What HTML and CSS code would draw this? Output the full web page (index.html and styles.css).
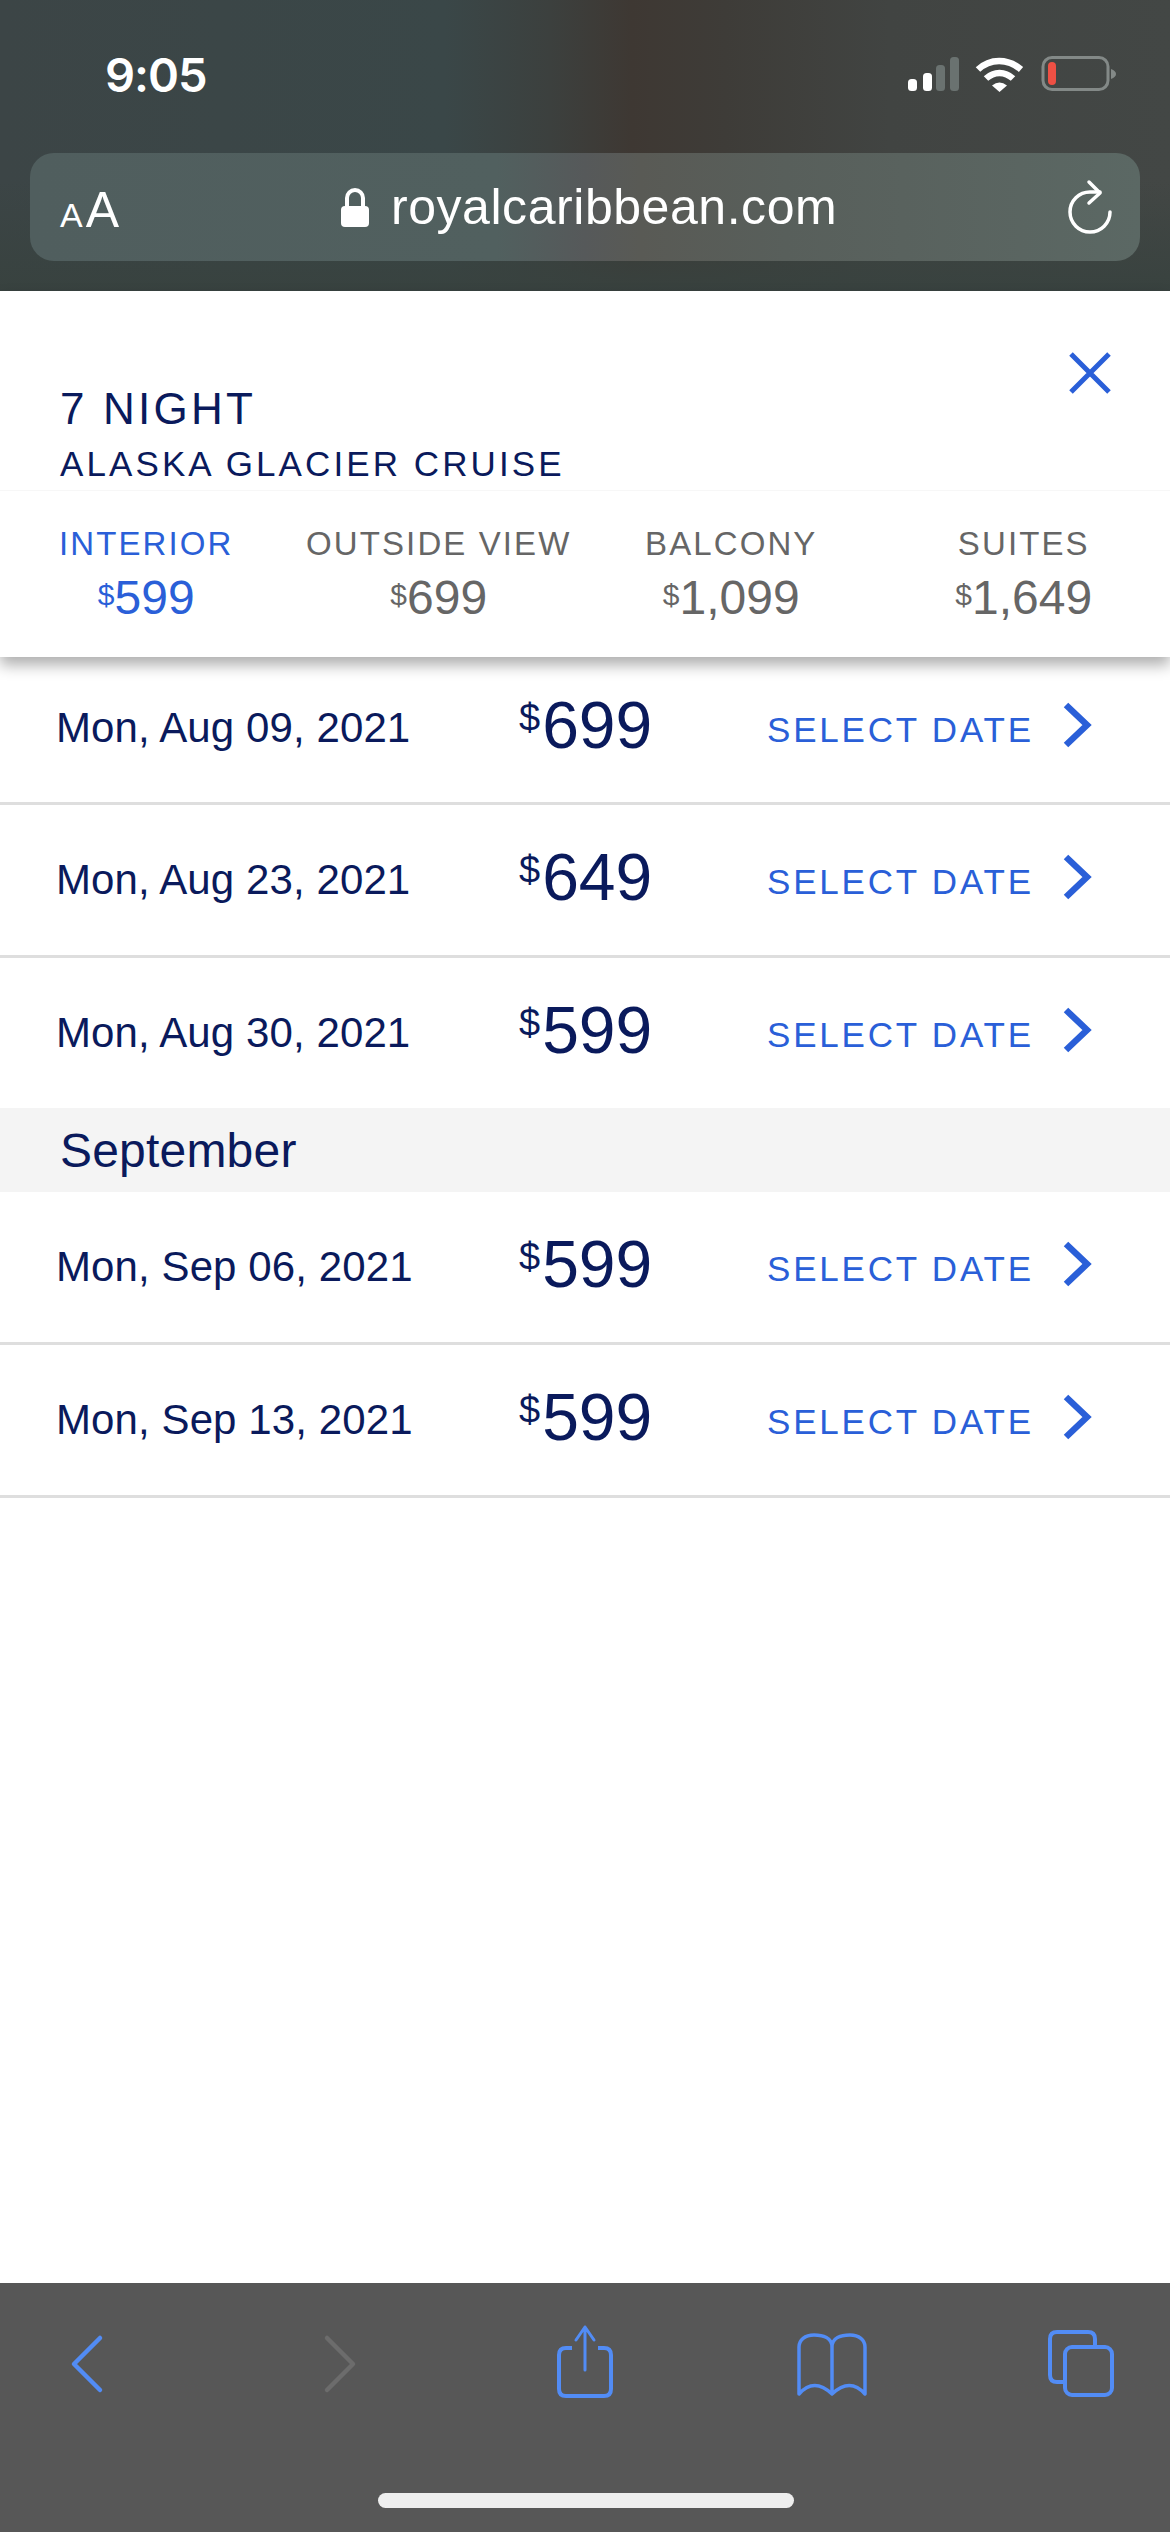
FILE: index.html
```html
<!DOCTYPE html>
<html lang="en">
<head>
<meta charset="utf-8">
<title>Royal Caribbean</title>
<link rel="stylesheet" href="styles.css">
</head>
<body>
<div class="phone">
  <header class="chrome">
    <div class="status">
      <span class="time">9:05</span>
      <svg class="status-icons" width="210" height="40" viewBox="0 0 210 40">
        <rect x="0" y="23" width="9" height="12" rx="3.5" fill="#fff"/>
        <rect x="15" y="17" width="9" height="18" rx="3.5" fill="#fff"/>
        <rect x="28" y="9" width="9" height="26" rx="3.5" fill="#6a7270"/>
        <rect x="42" y="1" width="9" height="34" rx="3.5" fill="#6a7270"/>
        <path d="M70 13.500C82 2 100 2 113 13.500" fill="none" stroke="#fff" stroke-width="6.5"/>
        <path d="M78 22.500C86 15 97 15 105 22.500" fill="none" stroke="#fff" stroke-width="6.5"/>
        <path d="M84 29.500Q91.500 23.500 99 29.500L91.500 36Z" fill="#fff"/>
        <rect x="135" y="1.500" width="65" height="32" rx="9" fill="none" stroke="#838987" stroke-width="3"/>
        <rect x="140" y="6" width="8" height="23" rx="4" fill="#ee5044"/>
        <path d="M203 13Q208 15 208 18T203 23Z" fill="#838987"/>
      </svg>
    </div>
    <div class="address">
      <span class="aa"><span class="aa-small">A</span>A</span>
      <span class="domain">
        <svg class="lock" width="28" height="39" viewBox="0 0 28 39"><path d="M6 20V10a8 8 0 0 1 16 0v10" fill="none" stroke="#fff" stroke-width="4"/><rect x="0" y="18" width="28" height="21" rx="4" fill="#fff"/></svg>
        <span class="domain-text">royalcaribbean.com</span>
      </span>
      <svg class="reload" width="46" height="56" viewBox="0 0 46 56"><path d="M44 33A20 20 0 1 1 24 13H34" fill="none" stroke="#fff" stroke-width="3.500" stroke-linecap="round"/><path d="M23 3L34 14L23 24" fill="none" stroke="#fff" stroke-width="3.500" stroke-linecap="round" stroke-linejoin="round"/></svg>
    </div>
  </header>

  <main class="page">
    <section class="card">
      <div class="card-head">
        <div class="titles">
          <h1 class="title">7 NIGHT</h1>
          <h2 class="subtitle">ALASKA GLACIER CRUISE</h2>
        </div>
        <svg class="close" width="44" height="42" viewBox="0 0 44 42"><path d="M3 2L41 40M41 2L3 40" fill="none" stroke="#2a5fd8" stroke-width="5"/></svg>
      </div>
      <div class="tabs">
        <div class="tab is-active"><div class="tab-name">INTERIOR</div><div class="tab-price"><span class="cur">$</span>599</div></div>
        <div class="tab"><div class="tab-name">OUTSIDE VIEW</div><div class="tab-price"><span class="cur">$</span>699</div></div>
        <div class="tab"><div class="tab-name">BALCONY</div><div class="tab-price"><span class="cur">$</span>1,099</div></div>
        <div class="tab"><div class="tab-name">SUITES</div><div class="tab-price"><span class="cur">$</span>1,649</div></div>
      </div>
    </section>

    <ul class="rows rows-first">
      <li class="row"><span class="date">Mon, Aug 09, 2021</span><span class="price"><span class="price-cur">$</span>699</span><span class="select">SELECT DATE</span><svg class="chev" width="30" height="46" viewBox="0 0 30 46"><path d="M4 3L25 23L4 43" fill="none" stroke="#2a5fd8" stroke-width="6.500"/></svg></li>
      <li class="row"><span class="date">Mon, Aug 23, 2021</span><span class="price"><span class="price-cur">$</span>649</span><span class="select">SELECT DATE</span><svg class="chev" width="30" height="46" viewBox="0 0 30 46"><path d="M4 3L25 23L4 43" fill="none" stroke="#2a5fd8" stroke-width="6.500"/></svg></li>
      <li class="row row-last"><span class="date">Mon, Aug 30, 2021</span><span class="price"><span class="price-cur">$</span>599</span><span class="select">SELECT DATE</span><svg class="chev" width="30" height="46" viewBox="0 0 30 46"><path d="M4 3L25 23L4 43" fill="none" stroke="#2a5fd8" stroke-width="6.500"/></svg></li>
    </ul>
    <div class="month">September</div>
    <ul class="rows">
      <li class="row"><span class="date">Mon, Sep 06, 2021</span><span class="price"><span class="price-cur">$</span>599</span><span class="select">SELECT DATE</span><svg class="chev" width="30" height="46" viewBox="0 0 30 46"><path d="M4 3L25 23L4 43" fill="none" stroke="#2a5fd8" stroke-width="6.500"/></svg></li>
      <li class="row"><span class="date">Mon, Sep 13, 2021</span><span class="price"><span class="price-cur">$</span>599</span><span class="select">SELECT DATE</span><svg class="chev" width="30" height="46" viewBox="0 0 30 46"><path d="M4 3L25 23L4 43" fill="none" stroke="#2a5fd8" stroke-width="6.500"/></svg></li>
    </ul>
  </main>

  <footer class="toolbar">
    <div class="tools">
      <svg class="tool" width="80" height="80" viewBox="0 0 80 80"><path d="M54 18L28 44L54 70" fill="none" stroke="#528cf5" stroke-width="4.500" stroke-linecap="round" stroke-linejoin="round"/></svg>
      <svg class="tool" width="80" height="80" viewBox="0 0 80 80"><path d="M31 18L57 44L31 70" fill="none" stroke="#6c6c6c" stroke-width="4.500" stroke-linecap="round" stroke-linejoin="round"/></svg>
      <svg class="tool" width="80" height="80" viewBox="0 0 80 80"><path d="M26 28H20Q13 28 13 35V69Q13 76 20 76H58Q65 76 65 69V35Q65 28 58 28H52" fill="none" stroke="#528cf5" stroke-width="4"/><path d="M39 50V7M30 20L39 7L48 20" fill="none" stroke="#528cf5" stroke-width="3" stroke-linecap="round" stroke-linejoin="round"/></svg>
      <svg class="tool" width="80" height="80" viewBox="0 0 80 80"><path d="M36 72V27C36 18 27 15 18 15C9 15 3 20 3 27V74Q18 57 36 74Q54 57 69 74V27C69 20 63 15 54 15C45 15 36 18 36 27" fill="none" stroke="#528cf5" stroke-width="3.500" stroke-linejoin="round"/></svg>
      <svg class="tool" width="80" height="80" viewBox="0 0 80 80"><path d="M18 62H11Q4 62 4 55V19Q4 12 11 12H42Q49 12 49 19V27" fill="none" stroke="#528cf5" stroke-width="4"/><rect x="19" y="27" width="47" height="48" rx="7" fill="none" stroke="#528cf5" stroke-width="4"/></svg>
    </div>
    <div class="home"></div>
  </footer>
</div>
</body>
</html>
```

FILE: styles.css
```css
* { box-sizing: border-box; }
html, body { margin: 0; padding: 0; background: #fff; }
body { font-family: "Liberation Sans", Arial, sans-serif; color: #0a1a5c; }
h1, h2, ul { margin: 0; padding: 0; list-style: none; font-weight: 400; }
.phone { width: 1170px; height: 2532px; display: flex; flex-direction: column; overflow: hidden; }

.chrome {
  height: 291px; flex: none; padding: 55px 30px 0;
  background:
    linear-gradient(180deg, rgba(56, 66, 63, 0) 62%, rgba(56, 66, 63, .95) 100%),
    linear-gradient(90deg, #3c4546 0%, #3a4748 38%, #3c403e 47%, #3e3833 54%, #3e3c38 62%, #414442 76%, #434745 100%);
}
.status { display: flex; justify-content: space-between; align-items: center; height: 40px; padding: 0 22px 0 75px; }
.time { font-family: Inter, sans-serif; font-weight: 600; font-size: 47px; color: #fff; line-height: 40px; letter-spacing: -1px; }
.status-icons { display: block; margin-top: 2px; }
.address {
  margin-top: 58px; height: 108px; border-radius: 24px; display: flex; align-items: center; justify-content: space-between;
  padding: 0 28px 0 30px; color: #fff;
  background: linear-gradient(90deg, #505e5e 0%, #51605f 42%, #56595a 50%, #595a55 55%, #585f5b 68%, #5b6864 100%);
}
.aa { font-size: 50px; line-height: 1; width: 281px; margin-top: 6px; }
.aa-small { font-size: 34px; margin-right: 3px; }
.domain { display: flex; align-items: center; gap: 22px; margin-right: auto; }
.lock { display: block; }
.domain-text { font-size: 50px; line-height: 60px; letter-spacing: .55px; }
.reload { display: block; }

.page { flex: 1; display: flex; flex-direction: column; background: #fff; }
.card { position: relative; z-index: 1; height: 366px; background: #fff; box-shadow: 0 8px 14px rgba(0, 0, 0, .32); }
.card-head { height: 200px; padding: 61px 58px 0 60px; display: flex; justify-content: space-between; align-items: flex-start; border-bottom: 1px solid #f7f7f7; }
.titles { padding-top: 32px; }
.title { font-size: 44px; line-height: 50px; letter-spacing: 3.2px; }
.subtitle { font-size: 35px; line-height: 42px; letter-spacing: 3.1px; margin-top: 9px; }
.close { display: block; }
.tabs { display: grid; grid-template-columns: repeat(4, 1fr); padding-top: 33px; color: #666; }
.tab { text-align: center; }
.tab.is-active { color: #2a5fd8; }
.tab-name { font-size: 33px; line-height: 40px; letter-spacing: 2.1px; }
.tab-price { font-size: 48px; line-height: 56px; margin-top: 3px; }
.cur { font-size: 30px; vertical-align: 9px; }

.row {
  height: 153px; border-bottom: 3px solid #dedede;
  display: grid; grid-template-columns: 463px 248px auto 30px; padding: 0 78px 0 56px; align-items: center;
}
.rows-first .row:first-child { height: 148px; padding-bottom: 4px; }
.row-last { border-bottom: 0; height: 150px; }
.date { font-size: 42px; letter-spacing: .1px; }
.price { font-size: 66px; margin-top: -6px; }
.price-cur { font-size: 38px; vertical-align: 17px; margin-right: 2px; }
.select { font-size: 35px; letter-spacing: 2.8px; color: #2a5fd8; margin-top: 4px; }
.chev { display: block; justify-self: end; margin-top: -6px; }
.month { height: 84px; background: #f4f4f4; padding: 2px 0 0 60px; font-size: 48px; line-height: 82px; letter-spacing: .2px; }

.toolbar { height: 249px; flex: none; background: #575757; padding: 37px 0 0 46px; position: relative; }
.tools { display: flex; gap: 170px; }
.tool { display: block; flex: none; }
.home { width: 416px; height: 15px; border-radius: 8px; background: #eee; margin: 93px 0 0 332px; }
```
